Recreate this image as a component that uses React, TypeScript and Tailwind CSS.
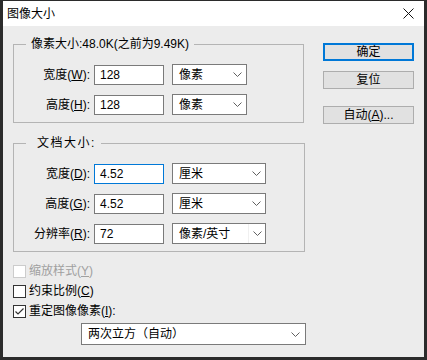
import type { ReactNode } from 'react';

const font = { fontFamily: '"Liberation Sans", "Noto Sans CJK SC", sans-serif' };

const Chevron = () => (
    <svg width="9" height="5" viewBox="0 0 9 5" className="shrink-0">
        <polyline points="0.5,0.5 4.5,4.5 8.5,0.5" fill="none" stroke="#606060" strokeWidth="1" />
    </svg>
);

const Select = ({ value, width, split }: { value: string; width: string; split?: boolean }) => (
    <div className={`${width} h-[21px] flex items-center bg-white border border-[#7a7a7a]`}>
        <span className="flex-1 pl-[6px] whitespace-nowrap overflow-hidden">{value}</span>
        <div className={`h-full w-[17px] flex items-center justify-center ${split ? 'border-l border-[#f0f0f0]' : ''}`}>
            <Chevron />
        </div>
    </div>
);

const Field = ({ value, focused }: { value: string; focused?: boolean }) => (
    <div
        className={`w-[70px] h-[20px] bg-white pl-[5px] flex items-center border ${
            focused ? 'border-[#0078d7]' : 'border-[#7a7a7a]'
        }`}
    >
        {value}
    </div>
);

const Row = ({
    label,
    value,
    unit,
    unitWidth,
    focused,
    split,
}: {
    label: ReactNode;
    value: string;
    unit: string;
    unitWidth: string;
    focused?: boolean;
    split?: boolean;
}) => (
    <div className="flex items-center h-[21px]">
        <div className="w-[76px] text-right whitespace-nowrap">{label}</div>
        <div className="ml-[4px]">
            <Field value={value} focused={focused} />
        </div>
        <div className="ml-[8px]">
            <Select value={unit} width={unitWidth} split={split} />
        </div>
    </div>
);

const Group = ({
    title,
    children,
    className,
    legendClass,
}: {
    title: string;
    children: ReactNode;
    className: string;
    legendClass: string;
}) => (
    <div className={`relative border border-[#b4b4b4] ${className}`}>
        <span className={`absolute -top-[9px] bg-[#ececec] leading-[16px] whitespace-nowrap ${legendClass}`}>{title}</span>
        {children}
    </div>
);

const Checkbox = ({ label, checked, disabled }: { label: ReactNode; checked?: boolean; disabled?: boolean }) => (
    <div className={`flex items-center h-[20px] ${disabled ? 'text-[#a0a0a0]' : 'text-black'}`}>
        <div
            className={`w-[13px] h-[13px] bg-white border flex items-center justify-center ${
                disabled ? 'border-[#cccccc]' : 'border-[#333333]'
            }`}
        >
            {checked && (
                <svg width="11" height="11" viewBox="0 0 11 11">
                    <polyline points="1.5,5.5 4,8 9.5,2.5" fill="none" stroke="#333" strokeWidth="1.2" />
                </svg>
            )}
        </div>
        <span className="ml-[3px] whitespace-nowrap">{label}</span>
    </div>
);

const Button = ({ children, primary }: { children: ReactNode; primary?: boolean }) => (
    <div
        className={`w-[91px] h-[18px] flex items-center justify-center bg-[#e1e1e1] ${
            primary ? 'border-2 border-[#0078d7]' : 'border border-[#adadad]'
        }`}
    >
        {children}
    </div>
);

export default function App() {
    return (
        <div className="w-[427px] h-[360px] bg-[#2b2b2b] pt-[1px] pl-[3px] text-[12px] text-black" style={font}>
            <div className="w-[421px] h-[356px] flex flex-col bg-[#ececec]">
                <div className="h-[25px] bg-white flex items-center justify-between pl-[4px] pr-[10px]">
                    <span className="text-[12px]">图像大小</span>
                    <svg width="11" height="11" viewBox="0 0 11 11">
                        <path d="M0.5 0.5L10.5 10.5M10.5 0.5L0.5 10.5" stroke="#111" strokeWidth="1" />
                    </svg>
                </div>

                <div className="flex flex-1">
                    <div className="ml-[10px] flex flex-col">
                        <Group
                            title="像素大小:48.0K(之前为9.49K)"
                            className="mt-[18px] w-[291px] h-[79px] pt-[19px]"
                            legendClass="left-[12px] px-[5px]"
                        >
                            <div className="flex flex-col gap-[9px]">
                                <Row label={<>宽度(<u>W</u>):</>} value="128" unit="像素" unitWidth="w-[75px]" />
                                <Row label={<>高度(<u>H</u>):</>} value="128" unit="像素" unitWidth="w-[75px]" />
                            </div>
                        </Group>

                        <Group
                            title="文档大小:"
                            className="mt-[20px] w-[292px] h-[109px] pt-[19px]"
                            legendClass="left-[12px] pl-[11px] pr-[5px] tracking-[1.5px]"
                        >
                            <div className="flex flex-col gap-[9px]">
                                <Row label={<>宽度(<u>D</u>):</>} value="4.52" unit="厘米" unitWidth="w-[94px]" focused />
                                <Row label={<>高度(<u>G</u>):</>} value="4.52" unit="厘米" unitWidth="w-[94px]" />
                                <Row label={<>分辨率(<u>R</u>):</>} value="72" unit="像素/英寸" unitWidth="w-[94px]" split />
                            </div>
                        </Group>

                        <div className="mt-[9px] flex flex-col">
                            <Checkbox label={<>缩放样式(<u>Y</u>)</>} disabled />
                            <Checkbox label={<>约束比例(<u>C</u>)</>} />
                            <Checkbox label={<>重定图像像素(<u>I</u>):</>} checked />
                        </div>

                        <div className="mt-[2px] ml-[68px]">
                            <div className="w-[225px] h-[22px] flex items-center bg-white border border-[#7a7a7a]">
                                <span className="flex-1 pl-[6px]">两次立方（自动）</span>
                                <div className="w-[20px] flex items-center justify-center">
                                    <Chevron />
                                </div>
                            </div>
                        </div>
                    </div>

                    <div className="ml-[17px] pt-[17px] flex flex-col">
                        <Button primary>确定</Button>
                        <div className="mt-[10px]">
                            <Button>复位</Button>
                        </div>
                        <div className="mt-[17px]">
                            <Button>
                                自动(<u>A</u>)...
                            </Button>
                        </div>
                    </div>
                </div>
            </div>
        </div>
    );
}
